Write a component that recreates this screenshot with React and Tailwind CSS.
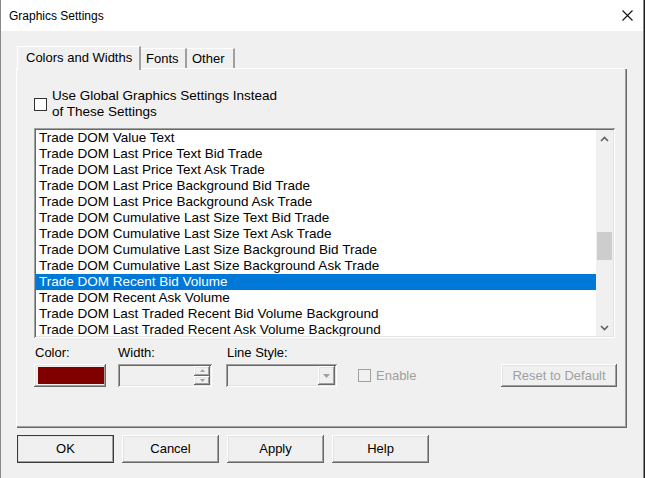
import React from "react";

const items = [
  "Trade DOM Value Text",
  "Trade DOM Last Price Text Bid Trade",
  "Trade DOM Last Price Text Ask Trade",
  "Trade DOM Last Price Background Bid Trade",
  "Trade DOM Last Price Background Ask Trade",
  "Trade DOM Cumulative Last Size Text Bid Trade",
  "Trade DOM Cumulative Last Size Text Ask Trade",
  "Trade DOM Cumulative Last Size Background Bid Trade",
  "Trade DOM Cumulative Last Size Background Ask Trade",
  "Trade DOM Recent Bid Volume",
  "Trade DOM Recent Ask Volume",
  "Trade DOM Last Traded Recent Bid Volume Background",
  "Trade DOM Last Traded Recent Ask Volume Background",
];

const raised =
  "bg-[#f0f0f0] shadow-[inset_-1px_-1px_0_#696969,inset_1px_1px_0_#ffffff,inset_-2px_-2px_0_#a0a0a0,inset_2px_2px_0_#e3e3e3]";
const sunken =
  "shadow-[inset_1px_1px_0_#a0a0a0,inset_-1px_-1px_0_#ffffff,inset_2px_2px_0_#696969,inset_-2px_-2px_0_#e3e3e3]";

function Chevron({ up }) {
  return (
    <svg width="9" height="6" viewBox="0 0 9 6">
      <polyline
        points={up ? "1,5 4.5,1.5 8,5" : "1,1 4.5,4.5 8,1"}
        fill="none"
        stroke="#606060"
        strokeWidth="1.6"
      />
    </svg>
  );
}

function Tri({ up, size = 5, color = "#a0a0a0" }) {
  return (
    <svg width={size * 2 - 1} height={size} viewBox={`0 0 ${size * 2 - 1} ${size}`}>
      <polygon
        points={up ? `0,${size} ${size - 0.5},0 ${size * 2 - 1},${size}` : `0,0 ${size - 0.5},${size} ${size * 2 - 1},0`}
        fill={color}
      />
    </svg>
  );
}

function DlgButton({ children, isDefault }) {
  return (
    <button
      className={`w-[97px] h-[28px] text-[13px] text-black ${raised} ${
        isDefault ? "outline outline-1 outline-[#3c3c3c] -outline-offset-1" : ""
      }`}
    >
      {children}
    </button>
  );
}

export default function App() {
  return (
    <div className="w-[645px] h-[478px] flex font-['Liberation_Sans',Arial,sans-serif] overflow-hidden bg-[#202020]">
      <div className="w-[644px] h-full flex flex-col border-l border-r border-[#888888] bg-[#f0f0f0]">
        {/* title bar */}
        <div className="h-[31px] bg-white flex items-center justify-between pl-[8px] pr-[10px]">
          <span className="text-[12px] text-black">Graphics Settings</span>
          <svg width="11" height="11" viewBox="0 0 11 11">
            <path d="M0.5 0.5 L10.5 10.5 M10.5 0.5 L0.5 10.5" stroke="#111" strokeWidth="1.1" />
          </svg>
        </div>

        <div className="flex-1 flex flex-col pt-[15px] pl-[15px]">
          {/* tabs */}
          <div className="flex items-end h-[22px] pl-[1px] relative z-10 text-[13px] text-black">
            <div className="h-[24px] -mb-[2px] w-[124px] flex items-center pl-[8px] bg-[#f0f0f0] border-t border-l border-white border-r-2 border-r-[#a0a0a0] pb-[1px]">
              Colors and Widths
            </div>
            <div className="h-[20px] w-[46px] flex items-center pl-[5px] border-t border-white border-r-2 border-r-[#a0a0a0]">
              Fonts
            </div>
            <div className="h-[20px] w-[48px] flex items-center pl-[5px] border-t border-white border-r-2 border-r-[#a0a0a0]">
              Other
            </div>
          </div>

          {/* panel */}
          <div className="w-[611px] h-[360px] flex flex-col pl-[18px] pt-[20px] shadow-[inset_1px_1px_0_#ffffff,inset_-1px_-1px_0_#696969,inset_-2px_-2px_0_#a0a0a0]">
            <label className="flex items-center gap-[5px] text-[13.5px] leading-[16px] text-black">
              <span className="w-[13px] h-[13px] bg-white border border-[#333333] shrink-0" />
              <span>
                Use Global Graphics Settings Instead
                <br />
                of These Settings
              </span>
            </label>

            {/* listbox */}
            <div className={`mt-[8px] w-[581px] h-[210px] bg-white p-[2px] flex ${sunken}`}>
              <div className="flex-1 overflow-hidden text-[13.5px] leading-[16px]">
                {items.map((t, i) => (
                  <div
                    key={t}
                    className={`h-[16px] pl-[3px] whitespace-nowrap ${
                      i === 9 ? "bg-[#0078d7] text-white" : "text-black"
                    }`}
                  >
                    {t}
                  </div>
                ))}
              </div>
              <div className="w-[17px] bg-[#f0f0f0] flex flex-col">
                <div className="h-[17px] flex items-center justify-center">
                  <Chevron up />
                </div>
                <div className="flex-1 flex flex-col">
                  <div className="h-[85px]" />
                  <div className="h-[28px] mx-[1px] bg-[#cdcdcd]" />
                </div>
                <div className="h-[17px] flex items-center justify-center">
                  <Chevron />
                </div>
              </div>
            </div>

            {/* bottom controls */}
            <div className="mt-[7px] flex items-end text-[13px] leading-[16px]">
              <div className="flex flex-col gap-[3px]">
                <span className="text-black pl-[1px]">Color:</span>
                <div className={`w-[72px] h-[23px] p-[3px] ${raised}`}>
                  <div className="w-full h-full bg-[#800000] ml-[1px]" />
                </div>
              </div>
              <div className="ml-[12px] flex flex-col gap-[3px]">
                <span className="text-black">Width:</span>
                <div className={`w-[94px] h-[23px] flex justify-end p-[2px] bg-[#f0f0f0] ${sunken}`}>
                  <div className="w-[16px] flex flex-col">
                    <div className={`flex-1 flex items-center justify-center ${raised}`}>
                      <Tri up size={3} />
                    </div>
                    <div className={`flex-1 flex items-center justify-center ${raised}`}>
                      <Tri size={3} />
                    </div>
                  </div>
                </div>
              </div>
              <div className="ml-[14px] flex flex-col gap-[3px]">
                <span className="text-black pl-[1px]">Line Style:</span>
                <div className={`w-[111px] h-[23px] flex justify-end p-[2px] bg-[#f0f0f0] ${sunken}`}>
                  <div className={`w-[17px] flex items-center justify-center ${raised}`}>
                    <Tri size={4} />
                  </div>
                </div>
              </div>
              <div className="ml-[21px] h-[23px] flex items-center gap-[5px] text-[#a0a0a0]">
                <span className="w-[13px] h-[13px] border border-[#a0a0a0] bg-[#f0f0f0]" />
                <span>Enable</span>
              </div>
              <div
                className={`ml-auto mr-[10px] w-[116px] h-[23px] flex items-center justify-center text-[#a0a0a0] ${raised}`}
              >
                Reset to Default
              </div>
            </div>
          </div>

          {/* dialog buttons */}
          <div className="mt-[7px] pl-[1px] flex gap-[8px]">
            <DlgButton isDefault>OK</DlgButton>
            <DlgButton>Cancel</DlgButton>
            <DlgButton>Apply</DlgButton>
            <DlgButton>Help</DlgButton>
          </div>
        </div>
      </div>
    </div>
  );
}
